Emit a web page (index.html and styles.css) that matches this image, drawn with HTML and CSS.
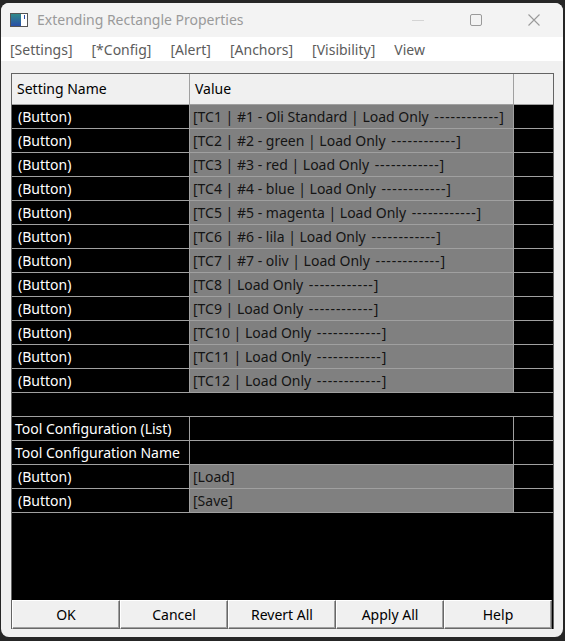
FILE: index.html
```html
<!DOCTYPE html>
<html lang="en">
<head>
    <meta charset="UTF-8">
    <meta name="viewport" content="width=device-width, initial-scale=1.0">
    <title>Extending Rectangle Properties</title>
    <link rel="stylesheet" href="styles.css">
</head>
<body>
    <div class="window">
        <div class="titlebar">
            <svg class="app-icon" width="18" height="14" viewBox="0 0 18 14">
                <defs>
                    <linearGradient id="ig" x1="0" y1="0" x2="0" y2="1">
                        <stop offset="0" stop-color="#2f8a8a"/>
                        <stop offset="1" stop-color="#2a4fa8"/>
                    </linearGradient>
                </defs>
                <rect x="0.5" y="0.5" width="17" height="13" fill="#fff" stroke="#555"/>
                <rect x="1" y="1" width="10" height="12" fill="url(#ig)"/>
                <rect x="14" y="2" width="1" height="4" fill="#2a4fa8"/>
            </svg>
            <span class="title">Extending Rectangle Properties</span>
            <div class="controls">
                <svg width="12" height="12" viewBox="0 0 12 12"><line x1="0" y1="6.5" x2="12" y2="6.5" stroke="#d4d4d4"/></svg>
                <svg width="12" height="12" viewBox="0 0 12 12"><rect x="0.5" y="0.5" width="11" height="11" rx="1.5" fill="none" stroke="#9a9a9a"/></svg>
                <svg width="12" height="12" viewBox="0 0 12 12"><path d="M0.5 0.5 L11.5 11.5 M11.5 0.5 L0.5 11.5" stroke="#9a9a9a" stroke-width="1.1"/></svg>
            </div>
        </div>

        <div class="menubar">
            <span>[Settings]</span>
            <span>[*Config]</span>
            <span>[Alert]</span>
            <span>[Anchors]</span>
            <span>[Visibility]</span>
            <span>View</span>
        </div>

        <div class="content">
            <div class="grid">
                <div class="row header">
                    <div class="cell">Setting Name</div>
                    <div class="cell">Value</div>
                    <div class="cell"></div>
                </div>

                <div class="row"><div class="cell name btn">(Button)</div><div class="cell value">[TC1 | #1 - Oli Standard | Load Only <span class="dash">------------</span>]</div><div class="cell"></div></div>
                <div class="row"><div class="cell name btn">(Button)</div><div class="cell value">[TC2 | #2 - green | Load Only <span class="dash">------------</span>]</div><div class="cell"></div></div>
                <div class="row"><div class="cell name btn">(Button)</div><div class="cell value">[TC3 | #3 - red | Load Only <span class="dash">------------</span>]</div><div class="cell"></div></div>
                <div class="row"><div class="cell name btn">(Button)</div><div class="cell value">[TC4 | #4 - blue | Load Only <span class="dash">------------</span>]</div><div class="cell"></div></div>
                <div class="row"><div class="cell name btn">(Button)</div><div class="cell value">[TC5 | #5 - magenta | Load Only <span class="dash">------------</span>]</div><div class="cell"></div></div>
                <div class="row"><div class="cell name btn">(Button)</div><div class="cell value">[TC6 | #6 - lila | Load Only <span class="dash">------------</span>]</div><div class="cell"></div></div>
                <div class="row"><div class="cell name btn">(Button)</div><div class="cell value">[TC7 | #7 - oliv | Load Only <span class="dash">------------</span>]</div><div class="cell"></div></div>
                <div class="row"><div class="cell name btn">(Button)</div><div class="cell value">[TC8 | Load Only <span class="dash">------------</span>]</div><div class="cell"></div></div>
                <div class="row"><div class="cell name btn">(Button)</div><div class="cell value">[TC9 | Load Only <span class="dash">------------</span>]</div><div class="cell"></div></div>
                <div class="row"><div class="cell name btn">(Button)</div><div class="cell value">[TC10 | Load Only <span class="dash">------------</span>]</div><div class="cell"></div></div>
                <div class="row"><div class="cell name btn">(Button)</div><div class="cell value">[TC11 | Load Only <span class="dash">------------</span>]</div><div class="cell"></div></div>
                <div class="row"><div class="cell name btn">(Button)</div><div class="cell value">[TC12 | Load Only <span class="dash">------------</span>]</div><div class="cell"></div></div>

                <div class="row spacer"></div>

                <div class="row"><div class="cell name">Tool Configuration (List)</div><div class="cell"></div><div class="cell"></div></div>
                <div class="row"><div class="cell name">Tool Configuration Name</div><div class="cell"></div><div class="cell"></div></div>
                <div class="row"><div class="cell name btn">(Button)</div><div class="cell value">[Load]</div><div class="cell"></div></div>
                <div class="row"><div class="cell name btn">(Button)</div><div class="cell value">[Save]</div><div class="cell"></div></div>

                <div class="filler"></div>

                <div class="buttons">
                    <button>OK</button>
                    <button>Cancel</button>
                    <button>Revert All</button>
                    <button>Apply All</button>
                    <button>Help</button>
                </div>
            </div>
        </div>
    </div>
</body>
</html>
```

FILE: styles.css
```css
body {
    margin: 0;
    padding: 0;
    background-color: #262626;
    font-family: "Noto Sans", "Open Sans", sans-serif;
    font-size: 14px;
}

.window {
    margin: 3px 0 0 1px;
    width: 562px;
    height: 634px;
    background-color: #f0f0f0;
    border-radius: 8px;
    display: flex;
    flex-direction: column;
    overflow: hidden;
}

.titlebar {
    height: 33px;
    background-color: #f3f3f3;
    display: flex;
    align-items: center;
    padding-left: 9px;
    padding-bottom: 1px;
}

.app-icon {
    margin-right: 9px;
}

.title {
    color: #9a9a9a;
    font-size: 14px;
    flex: 1;
}

.controls {
    display: flex;
    gap: 46px;
    padding-right: 23px;
}

.menubar {
    height: 24px;
    background-color: #fff;
    display: flex;
    align-items: center;
    gap: 19px;
    padding-left: 9px;
    color: #5c5c5c;
}

.content {
    flex: 1;
    padding: 12px 0 8px 10px;
    display: flex;
}

.grid {
    width: 541px;
    background-color: #000;
    border: 1px solid #646464;
    border-bottom: none;
    display: flex;
    flex-direction: column;
}

.row {
    display: grid;
    grid-template-columns: 178px 324px 1fr;
    height: 24px;
    box-sizing: border-box;
    border-bottom: 1px solid #a0a0a0;
}

.cell {
    box-sizing: border-box;
    border-right: 1px solid #a0a0a0;
    padding-left: 3px;
    line-height: 23px;
    white-space: nowrap;
    overflow: hidden;
}

.cell:last-child {
    border-right: none;
}

.header {
    height: 31px;
    background-color: #f0f0f0;
    color: #000;
}

.header .cell {
    line-height: 30px;
    padding-left: 5px;
}

.name {
    color: #fff;
}

.name.btn {
    padding-left: 6px;
}

.value {
    background-color: #808080;
    color: #141414;
    padding-left: 3px;
}

.dash {
    letter-spacing: 0.9px;
    margin-left: 2px;
}

.spacer {
    display: block;
}

.filler {
    flex: 1;
}

.buttons {
    display: flex;
    height: 29px;
}

.buttons button {
    width: 108px;
    height: 29px;
    margin: 0;
    padding: 0;
    background-color: #f0f0f0;
    border: 1px solid;
    border-color: #fff #696969 #696969 #fff;
    box-shadow: inset -1px -1px 0 #a0a0a0;
    font-family: "Noto Sans", "Open Sans", sans-serif;
    font-size: 14px;
    color: #000;
}
```
